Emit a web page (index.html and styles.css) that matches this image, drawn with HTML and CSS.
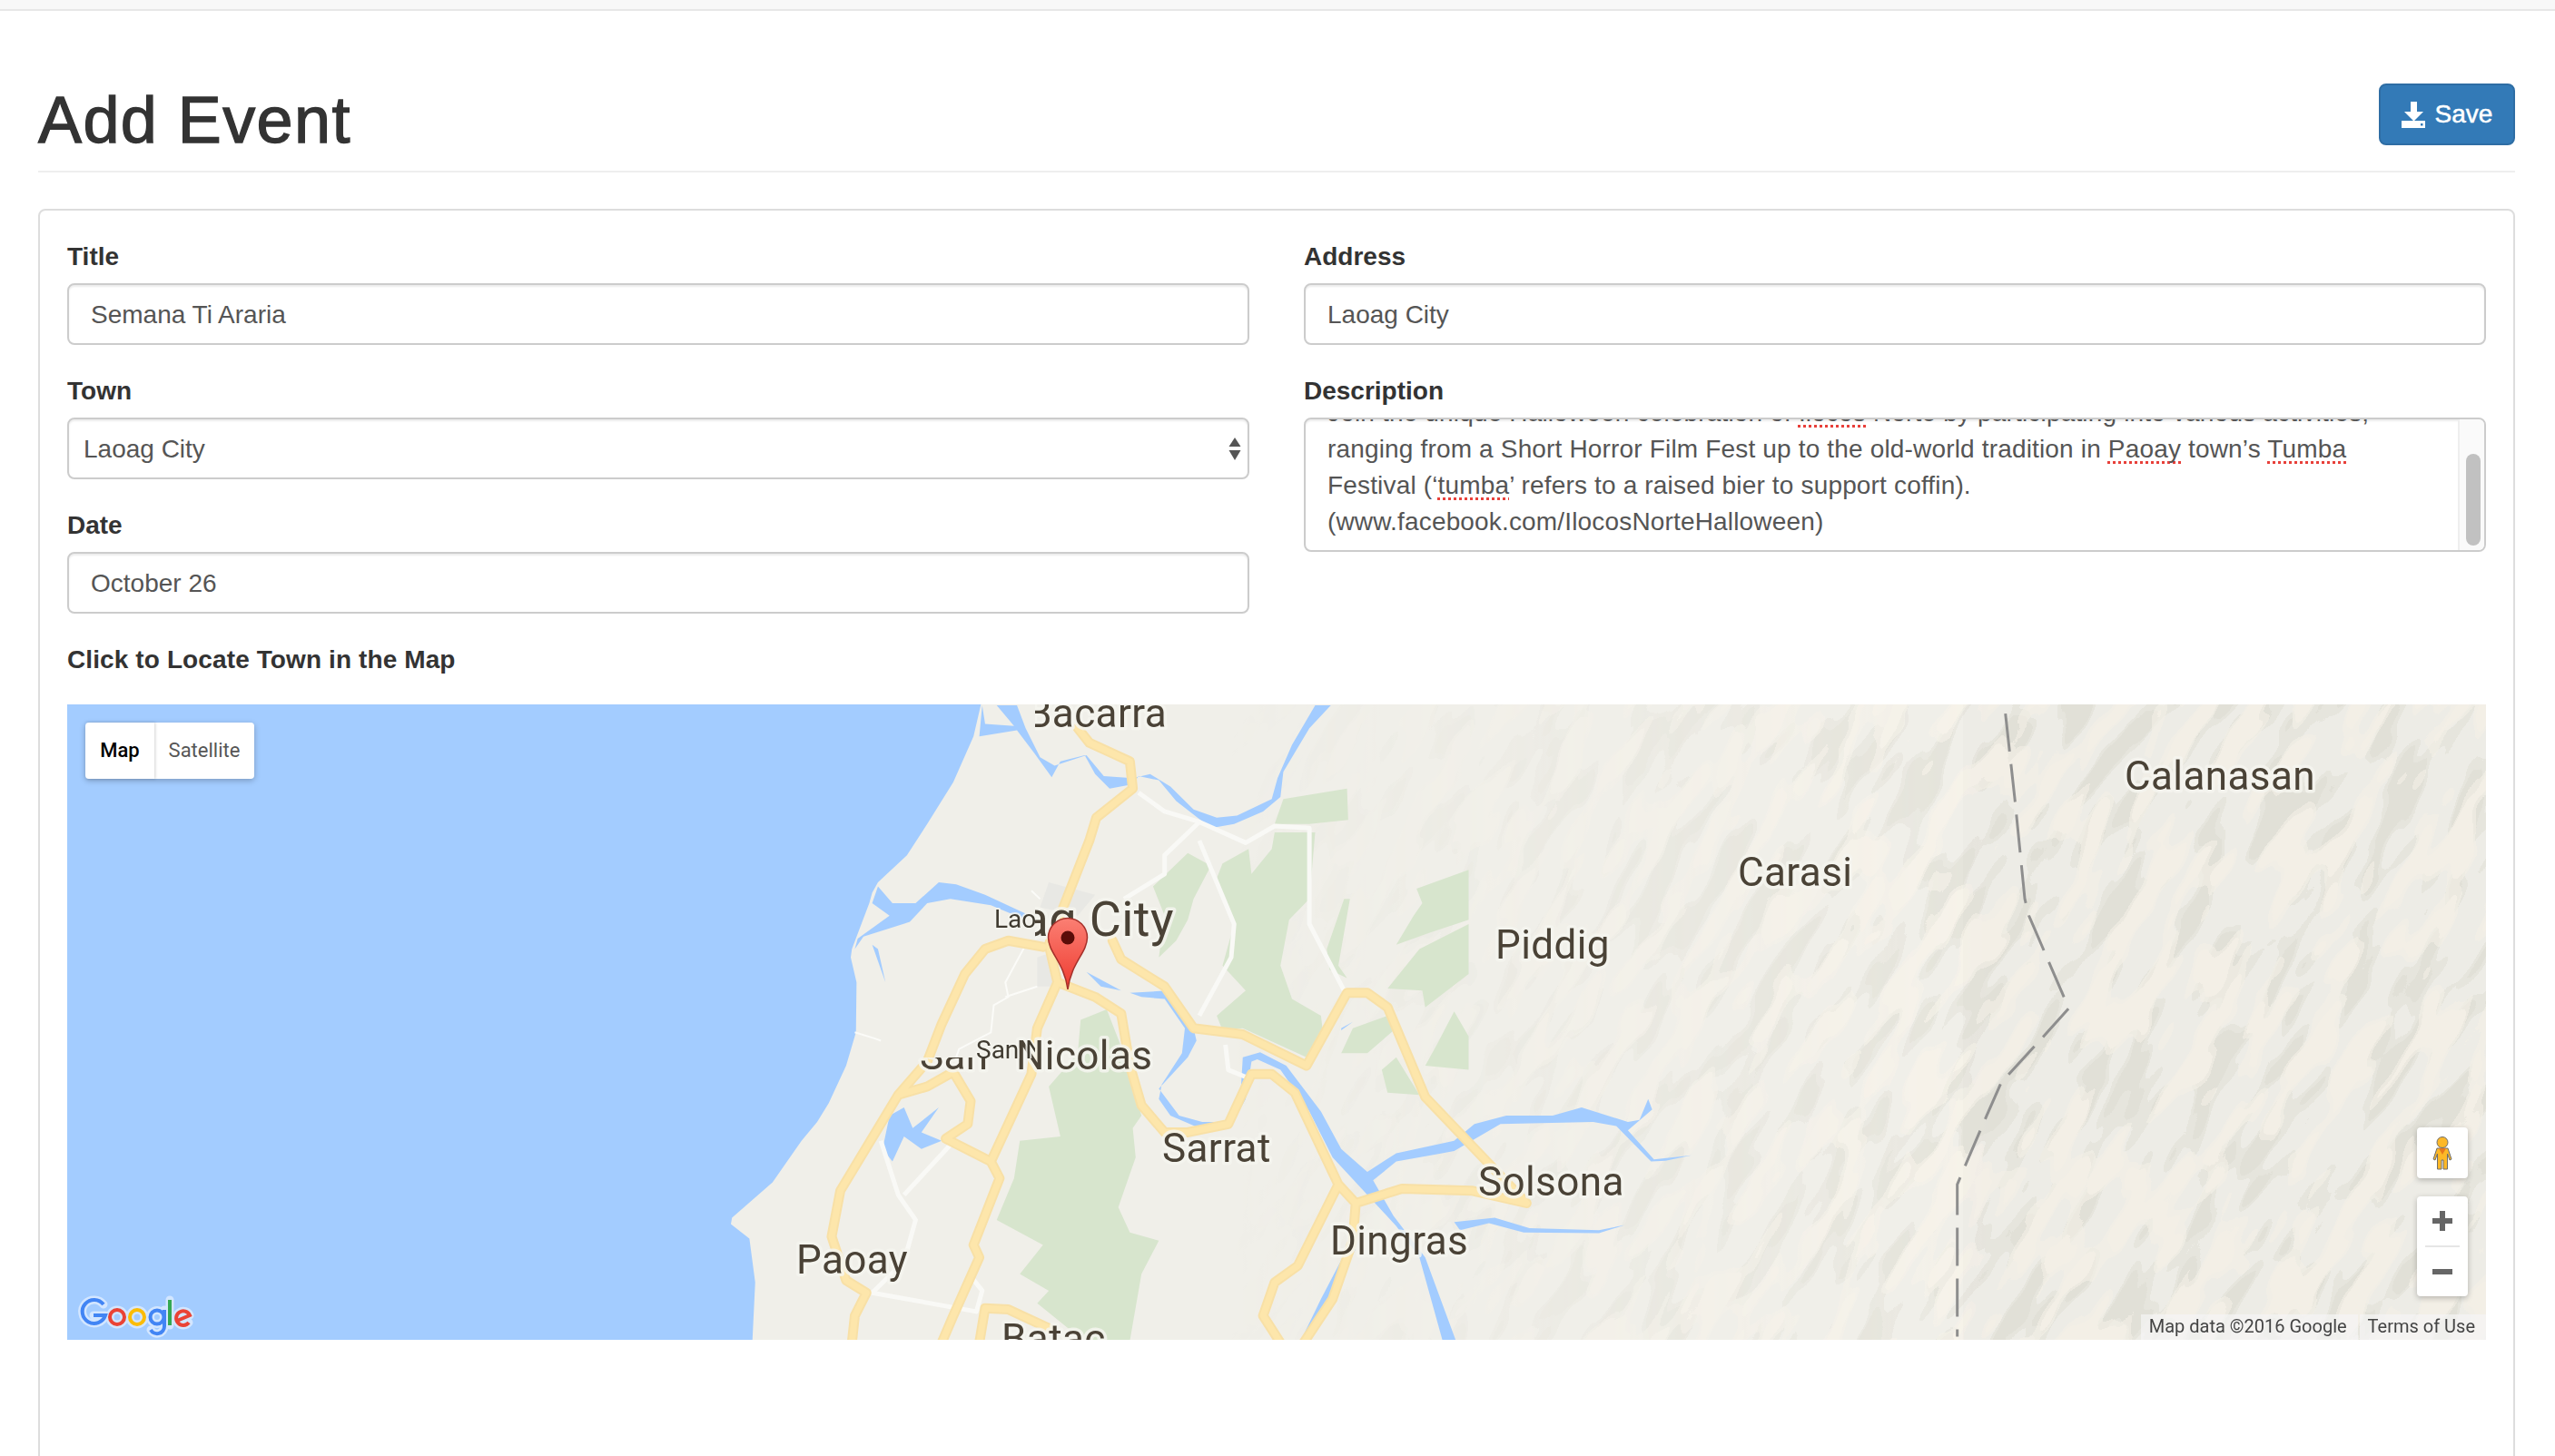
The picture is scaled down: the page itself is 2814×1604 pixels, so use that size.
FILE: index.html
```html
<!DOCTYPE html>
<html lang="en">
<head>
<meta charset="utf-8">
<title>Add Event</title>
<link rel="stylesheet" href="styles.css">
</head>
<body>
<div class="topbar"></div>
<main class="page">
  <header class="page-header">
    <h1 class="page-title">Add Event</h1>
    <button class="btn-save" type="button">
      <svg class="save-icon" viewBox="0 0 26 29" width="26" height="29"><path d="M10 0h7v11h7L13.500 21.500 3 11h7z"/><path fill-rule="evenodd" d="M0 21h7.500l6 0 6 0H26v8H0zM21 24v2.500h2.500V24z"/></svg>
      <span class="btn-text">Save</span>
    </button>
  </header>
  <section class="card">
    <div class="form-grid">
      <div class="col">
        <div class="group"><label class="lbl">Title</label><input class="ctl" type="text" value="Semana Ti Araria"></div>
        <div class="group"><label class="lbl">Town</label>
          <div class="select-wrap">
            <select class="ctl ctl-select"><option>Laoag City</option></select>
            <svg class="select-arrows" viewBox="0 0 14 25" width="14" height="25"><path d="M7 0l6.500 10H.5z"/><path d="M7 25l6.500-11H.5z"/></svg>
          </div>
        </div>
        <div class="group"><label class="lbl">Date</label><input class="ctl" type="text" value="October 26"></div>
      </div>
      <div class="col">
        <div class="group"><label class="lbl">Address</label><input class="ctl" type="text" value="Laoag City"></div>
        <div class="group"><label class="lbl">Description</label>
          <div class="textarea">
            <div class="textarea-text">
              Join the unique Halloween celebration of <span class="sp">Ilocos</span> Norte by participating into various activities,<br>
              ranging from a Short Horror Film Fest up to the old-world tradition in <span class="sp">Paoay</span> town’s <span class="sp">Tumba</span><br>
              Festival (‘<span class="sp">tumba</span>’ refers to a raised bier to support coffin).<br>
              (www.facebook.com/IlocosNorteHalloween)
            </div>
            <div class="sb-track"><div class="sb-thumb"></div></div>
          </div>
        </div>
      </div>
    </div>
    <label class="lbl lbl-map">Click to Locate Town in the Map</label>
    <div class="map">
      <svg class="map-svg" viewBox="74 776 2664 700" width="2664" height="700" xmlns="http://www.w3.org/2000/svg">
        <defs>
          <filter id="ter1" x="0" y="0" width="100%" height="100%" color-interpolation-filters="sRGB">
            <feTurbulence type="fractalNoise" baseFrequency="0.011 0.036" numOctaves="2" seed="7"/>
            <feColorMatrix type="matrix" values="0 0 0 0 0.895  0 0 0 0 0.89  0 0 0 0 0.855  3 0 0 0 -1"/>
            <feComponentTransfer><feFuncA type="discrete" tableValues="0 0 0 0.6 1"/></feComponentTransfer>
          </filter>
          <filter id="ter2" x="0" y="0" width="100%" height="100%" color-interpolation-filters="sRGB">
            <feTurbulence type="fractalNoise" baseFrequency="0.012 0.038" numOctaves="2" seed="23"/>
            <feColorMatrix type="matrix" values="0 0 0 0 0.965  0 0 0 0 0.95  0 0 0 0 0.915  3 0 0 0 -1"/>
            <feComponentTransfer><feFuncA type="discrete" tableValues="0 0 0 0.6 1"/></feComponentTransfer>
          </filter>
          <linearGradient id="terFade" x1="1350" x2="2200" y1="0" y2="0" gradientUnits="userSpaceOnUse">
            <stop offset="0" stop-color="#000"/><stop offset="0.5" stop-color="#777"/><stop offset="1" stop-color="#fff"/>
          </linearGradient>
          <mask id="terMask" maskUnits="userSpaceOnUse" x="74" y="776" width="2664" height="700">
            <rect x="74" y="776" width="2664" height="700" fill="url(#terFade)"/>
          </mask>
          <clipPath id="cTileR"><rect x="1140" y="776" width="700" height="700"/></clipPath>
          <clipPath id="cTileL"><rect x="1000" y="960" width="140" height="206"/></clipPath>
          <clipPath id="cLow"><rect x="900" y="1165" width="600" height="100"/></clipPath>
          <linearGradient id="pin" x1="0" y1="0" x2="0" y2="1">
            <stop offset="0" stop-color="#fb7f73"/><stop offset="1" stop-color="#ee3b30"/>
          </linearGradient>
        </defs>
        <rect class="land" x="74" y="776" width="2664" height="700"/>

        <g mask="url(#terMask)">
          <g transform="rotate(-60 1900 1126)">
            <rect x="900" y="100" width="2100" height="2100" filter="url(#ter1)"/>
            <rect x="900" y="100" width="2100" height="2100" filter="url(#ter2)"/>
          </g>
        </g>
        <rect class="tile-shade" x="2162" y="776" width="576" height="700"/>

        <!-- zoomed coordinates of the centre of the map -->
        <g transform="translate(900 770) scale(0.6378 0.4591)">
          <g class="forest">
            <path d="M700 395L745 360 750 420 785 360 790 320 860 320 850 480 815 530 800 640 820 720 870 760 875 820 845 860 735 790 700 795 690 760 740 700 700 640 720 540 690 430Z"/>
            <path d="M805 240L915 215 917 290 850 300 790 300Z"/>
            <path d="M580 450L640 370 680 400 650 480 640 530 620 580 590 620 600 520Z"/>
            <path d="M1035 455L1125 410 1125 530 1060 560 1000 590 1030 520 1045 490Z"/>
            <path d="M1040 600L1125 540 1125 660 1050 740 1045 700 985 695Z"/>
            <path d="M905 850L925 790 985 760 1000 790 950 850Z"/>
            <path d="M975 890L1000 860 1040 950 985 945Z"/>
            <path d="M880 600L910 480 920 480 900 640 915 670 885 650Z"/>
            <path d="M1070 830L1100 750 1125 810 1125 890 1050 880Z"/>
            <path d="M455 770L500 745 535 870 560 1000 545 1030 550 1100 520 1220 540 1280 590 1300 560 1380 540 1540 460 1540 380 1450 400 1420 350 1380 390 1310 310 1250 340 1150 350 1060 420 1050 400 930 450 850Z"/>
          </g>
          <path class="built" d="M400 440L480 470 450 520 385 500Z"/>
          <path class="built" d="M380 620L420 600 410 690 380 690Z"/>

          <!-- sea -->
          <path class="water" d="M285 0L270 90 235 200 190 300 155 375 105 440 95 465 90 490 60 600 58 620 68 680 67 800 50 880 20 970 0 1015-27 1060-77 1160-147 1245-149 1260-117 1295-107 1400-112 1545-1300 1545-1300 0Z"/>
          <!-- rivers -->
          <path class="water" d="M65 600L80 570 160 535 190 490 230 480 300 495 360 530 360 515 290 470 240 445 210 440 170 490 130 490 105 450 95 490 125 520 100 545 70 575Z"/>
          <path class="water" d="M95 590L118 680 105 600Z"/>
          <path class="water" d="M465 655L525 700 490 690Z"/>
          <path class="water" d="M540 705L605 700 650 790 655 820 640 860 590 935 625 1000 665 1015 705 1015 730 975 735 860 765 848 810 880 870 990 905 1080 950 1135 1000 1090 1100 1060 1135 1020 1190 1000 1270 1000 1320 980 1400 1015 1420 1010 1435 960 1442 985 1400 1035 1445 1105 1510 1095 1465 1108 1440 1110 1380 1025 1340 1015 1180 1020 1100 1085 1000 1110 960 1155 995 1240 1050 1340 1103 1540 1080 1540 1040 1340 1000 1265 950 1190 890 1100 850 990 800 890 760 865 750 870 740 960 720 1010 660 1030 610 1000 590 960 595 925 630 850 635 790 600 720 560 715Z"/>
          <path class="water" d="M1100 1255L1170 1245 1230 1270 1350 1275 1395 1262 1350 1282 1220 1280 1160 1258 1110 1275Z"/>
          <path class="water" d="M930 1320L880 1450 850 1540 835 1540 870 1440 915 1320Z"/>
          <path class="water" d="M113 1080L125 1000 150 980 165 1030 210 980 180 1040 215 1060 180 1080 150 1050 130 1110Z"/>
          <path class="water" d="M905 790L925 775 905 795Z"/>
          <path class="water" d="M285 15L280 90 345 75 375 130 405 188 420 150 462 135 480 180 505 215 545 205 555 185 590 195 620 245 680 310 720 300 770 270 800 235 805 175 850 70 887 15 860 15 820 110 795 190 785 240 725 280 690 285 650 265 610 210 575 180 545 190 495 185 465 135 410 160 385 140 360 70 345 15 310 15 340 65 290 60Z"/>

          <g class="road-thin">
            <path d="M370 460L385 480M360 590L325 680 330 715 305 735 300 800 245 840 240 860M325 715L380 690M65 800L100 815 110 820"/>
          </g>
          <g class="road-white">
            <path d="M555 225L600 270 660 295 740 345 790 305 850 310 850 540 910 700"/>
            <path d="M660 295L600 375 600 420 530 480"/>
            <path d="M660 340L720 540 715 620 660 760"/>
            <path d="M705 830L710 890 745 910"/>
            <path d="M110 1060L140 1190 170 1250 150 1350 95 1425 275 1470 285 1420 265 1385"/>
            <path d="M150 1190L230 1070"/>
          </g>
          <g class="road road-case">
            <path d="M450 70L470 105 540 150 545 215 482 285 470 340 425 500 400 590 415 680 380 790 370 900 300 1110 315 1150 270 1310 280 1340 235 1480 215 1545M390 595L330 580 290 600 255 660 215 780 190 870 140 950 40 1180 25 1290 50 1395 85 1425 65 1480 60 1545M415 680L480 715 525 755 540 880 560 975 600 1040 640 1040 710 1020 750 900 785 900 825 945 900 1165 930 1210 1010 1175 1130 1180 1225 1210M510 580L525 625 600 690 650 790 735 805 845 880 915 705 950 705 985 740 1050 955 1225 1210M900 1165L830 1360 790 1400 770 1480 800 1545M930 1210L925 1300 890 1440 840 1545M140 950L190 930 235 895 265 965 260 1020 222 1055 300 1110M280 1545L290 1462 330 1465 400 1510"/>
          </g>
          <g class="road road-fill">
            <path d="M450 70L470 105 540 150 545 215 482 285 470 340 425 500 400 590 415 680 380 790 370 900 300 1110 315 1150 270 1310 280 1340 235 1480 215 1545M390 595L330 580 290 600 255 660 215 780 190 870 140 950 40 1180 25 1290 50 1395 85 1425 65 1480 60 1545M415 680L480 715 525 755 540 880 560 975 600 1040 640 1040 710 1020 750 900 785 900 825 945 900 1165 930 1210 1010 1175 1130 1180 1225 1210M510 580L525 625 600 690 650 790 735 805 845 880 915 705 950 705 985 740 1050 955 1225 1210M900 1165L830 1360 790 1400 770 1480 800 1545M930 1210L925 1300 890 1440 840 1545M140 950L190 930 235 895 265 965 260 1020 222 1055 300 1110M280 1545L290 1462 330 1465 400 1510"/>
          </g>
        </g>

        <!-- province border -->
        <g transform="translate(1800 770) scale(0.6467 0.4591)">
          <path class="border-line" d="M632 35L648 240 665 480 672 520 730 710 740 742 700 805 625 920 600 1000 565 1115 550 1165 550 1530"/>
        </g>

        <!-- place labels -->
        <g class="labels">
          <text x="1131" y="801" clip-path="url(#cTileR)">Bacarra</text>
          <text class="big" x="1035" y="1031" clip-path="url(#cTileR)">Laoag City</text>
          <text x="1013" y="1178" clip-path="url(#cLow)">San</text>
          <text x="1119" y="1178">Nicolas</text>
          <text class="small" x="1095" y="1022" clip-path="url(#cTileL)">Laoag</text>
          <text class="small" x="1075" y="1166" clip-path="url(#cTileL)">San Nicolas</text>
          <text x="1280" y="1280">Sarrat</text>
          <text x="1628" y="1317">Solsona</text>
          <text x="1465" y="1382">Dingras</text>
          <text x="877" y="1403">Paoay</text>
          <text x="1103" y="1490">Batac</text>
          <text x="1647" y="1056">Piddig</text>
          <text x="1914" y="976">Carasi</text>
          <text x="2340" y="870">Calanasan</text>
        </g>

        <!-- marker -->
        <path d="M1176 1090C1172 1060 1155 1050 1154.500 1033A21.500 21.500 0 1 1 1197.500 1033C1197 1050 1180 1060 1176 1090Z" fill="url(#pin)" stroke="#a5302a" stroke-width="1.500"/>
        <circle cx="1176" cy="1033" r="7.500" fill="#5a0d08"/>

        <!-- Google logo -->
        <g class="logo-halo">
          <path d="M114 1437A13 13 0 1 0 116 1449H103"/>
          <circle cx="129" cy="1451" r="8"/>
          <circle cx="151" cy="1451" r="8"/>
          <circle cx="173" cy="1451" r="7.500"/>
          <path d="M181 1443V1461A8 8 0 0 1 166 1465"/>
          <path d="M187 1432V1460"/>
          <path d="M195 1455L209 1449A7.800 7.800 0 1 0 208 1457"/>
        </g>
        <g class="logo">
          <path stroke="#4285f4" d="M114 1437A13 13 0 1 0 116 1449H103"/>
          <circle stroke="#ea4335" cx="129" cy="1451" r="8"/>
          <circle stroke="#fbbc05" cx="151" cy="1451" r="8"/>
          <circle stroke="#4285f4" cx="173" cy="1451" r="7.500"/>
          <path stroke="#4285f4" d="M181 1443V1461A8 8 0 0 1 166 1465"/>
          <path stroke="#34a853" d="M187 1432V1460"/>
          <path stroke="#ea4335" d="M195 1455L209 1449A7.800 7.800 0 1 0 208 1457"/>
        </g>
      </svg>

      <div class="map-type">
        <div class="mt-btn mt-on">Map</div>
        <div class="mt-btn">Satellite</div>
      </div>

      <div class="map-ctl pegman">
        <svg viewBox="0 0 24 38" width="24" height="38"><circle cx="12" cy="7.500" r="6" fill="#fdb827" stroke="#6d6d6d" stroke-width="1"/><path d="M6 14H18L22 26 20 27 17.500 20V37H13V27H11V37H6.500V20L4 27 2 26Z" fill="#fdb827" stroke="#6d6d6d" stroke-width="1" stroke-linejoin="round"/><path d="M8 14H16L12 21Z" fill="#e8791c"/></svg>
      </div>
      <div class="map-ctl zoomer">
        <div class="zm"><svg viewBox="0 0 22 22" width="22" height="22"><path d="M8 0h6v8h8v6h-8v8H8v-8H0V8h8z" fill="#666"/></svg></div>
        <div class="zm-div"></div>
        <div class="zm"><svg viewBox="0 0 22 6" width="22" height="6"><rect width="22" height="6" fill="#666"/></svg></div>
      </div>

      <div class="attrib">
        <span class="attrib-item">Map data ©2016 Google</span>
        <span class="attrib-item">Terms of Use</span>
      </div>
    </div>
  </section>
</main>
</body>
</html>
```

FILE: styles.css
```css
* { box-sizing: border-box; }
html, body { margin: 0; padding: 0; height: 1604px; overflow: hidden; background: #fff; }
body { font-family: "Liberation Sans", Arial, sans-serif; font-size: 28px; line-height: 40px; color: #333; }

.topbar { height: 12px; background: #f8f8f8; border-bottom: 2px solid #e7e7e7; }
.page { padding: 0 44px 0 42px; }

.page-header { display: flex; justify-content: space-between; align-items: flex-start; height: 178px; padding-top: 80px; border-bottom: 2px solid #eee; }
.page-title { margin: 0; font-size: 72px; line-height: 80px; font-weight: 400; color: #333; letter-spacing: 1.4px; -webkit-text-stroke: 1.3px #333; }

.btn-save { display: flex; align-items: center; gap: 11px; width: 150px; height: 68px; justify-content: center; padding: 0; background: #337ab7; border: 2px solid #2e6da4; border-radius: 8px; color: #fff; font: inherit; }
.btn-text { -webkit-text-stroke: .5px #fff; }
.save-icon { fill: #fff; flex: none; }

.card { margin-top: 40px; height: 1500px; padding: 30px; border: 2px solid #ddd; border-radius: 8px; }
.form-grid { display: grid; grid-template-columns: 1302px 1302px; column-gap: 60px; }
.group { margin-bottom: 30px; }
.lbl { display: block; margin-bottom: 8px; line-height: 42px; font-weight: 700; color: #333; }
.lbl-map { margin-bottom: 28px; letter-spacing: .11px; }

.ctl { display: block; width: 100%; height: 68px; padding: 13px 24px 11px; border: 2px solid #ccc; border-radius: 8px; background: #fff; color: #555; font: inherit; box-shadow: inset 0 2px 2px rgba(0,0,0,.075); outline: none; }

.select-wrap { position: relative; }
.ctl-select { appearance: none; -webkit-appearance: none; padding: 13px 16px 11px; }
.select-arrows { position: absolute; right: 9px; top: 22px; fill: #555; }

.textarea { position: relative; height: 148px; padding: 0 24px; border: 2px solid #ccc; border-radius: 8px; color: #555; overflow: hidden; box-shadow: inset 0 2px 2px rgba(0,0,0,.075); }
.textarea-text { margin-top: -27px; white-space: nowrap; letter-spacing: .165px; }
.sp { text-decoration: underline dotted #e8403a 3px; text-underline-offset: 4px; text-decoration-skip-ink: none; }
.sb-track { position: absolute; top: 0; right: 0; bottom: 0; width: 29px; background: #fafafa; border-left: 2px solid #eee; }
.sb-thumb { position: absolute; top: 38px; bottom: 5px; left: 7px; width: 16px; border-radius: 8px; background: #c1c1c1; }

.map { position: relative; width: 2664px; height: 700px; overflow: hidden; }
.map-svg { display: block; }
.land { fill: #f0efe9; }
.tile-shade { fill: #000; opacity: .012; }
.forest path { fill: #d7e5cd; }
.built { fill: #e8e8e4; }
.water { fill: #a3ccff; }
.road-thin path { fill: none; stroke: #fbfbf8; stroke-width: 2; vector-effect: non-scaling-stroke; }
.road-white path { fill: none; stroke: #f9f9f6; stroke-width: 5; stroke-linejoin: round; vector-effect: non-scaling-stroke; }
.road path { fill: none; stroke-linejoin: round; stroke-linecap: round; vector-effect: non-scaling-stroke; }
.road-case path { stroke: #f8e0a6; stroke-width: 11; }
.road-fill path { stroke: #fde6ab; stroke-width: 7; }
.border-line { fill: none; stroke: #8e8e8e; stroke-width: 3; stroke-dasharray: 42 14; vector-effect: non-scaling-stroke; }

.labels { filter: blur(.5px); }
.labels text { font-family: Roboto, sans-serif; font-size: 44px; letter-spacing: .4px; fill: #4a4236; stroke: rgba(245,244,238,.85); stroke-width: 7px; paint-order: stroke; stroke-linejoin: round; }
.labels text.big { font-size: 54px; }
.labels text.small { font-size: 28px; letter-spacing: 0; stroke-width: 4px; fill: #3f3a30; }

.logo circle, .logo path, .logo-halo circle, .logo-halo path { fill: none; }
.logo circle, .logo path { stroke-width: 4; }
.logo-halo circle, .logo-halo path { stroke: #d3e6ff; stroke-width: 9; stroke-linejoin: round; stroke-linecap: round; }

.map-type { position: absolute; left: 20px; top: 20px; display: flex; height: 62px; background: #fff; border-radius: 4px; box-shadow: 0 2px 6px rgba(0,0,0,.25); font-family: Roboto, sans-serif; font-size: 22px; line-height: 62px; color: #565656; }
.mt-btn { width: 110px; text-align: center; }
.mt-on { width: 76px; color: #000; font-weight: 500; box-shadow: 1px 0 3px rgba(0,0,0,.18); }

.map-ctl { position: absolute; left: 2588px; width: 56px; display: flex; flex-direction: column; align-items: center; justify-content: center; background: #fff; border-radius: 4px; box-shadow: 0 2px 6px rgba(0,0,0,.25); }
.pegman { top: 466px; height: 56px; }
.zoomer { top: 542px; height: 110px; }
.zm { height: 54px; display: flex; align-items: center; justify-content: center; }
.zm-div { width: 38px; height: 2px; background: #e6e6e6; }

.attrib { position: absolute; right: 0; bottom: 0; display: flex; gap: 2px; height: 28px; font-family: Roboto, sans-serif; font-size: 20px; line-height: 26px; color: #444; }
.attrib-item { padding: 0 12px 0 9px; background: rgba(245,245,245,.7); }
```
